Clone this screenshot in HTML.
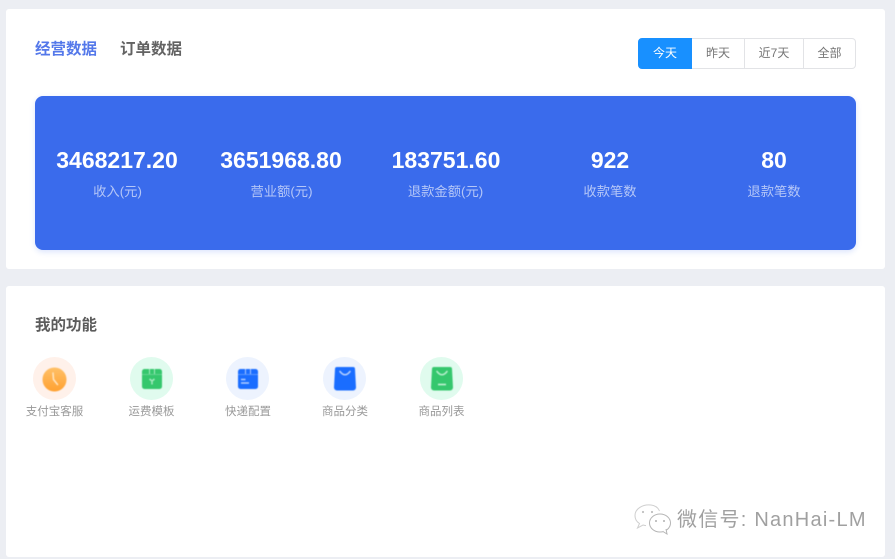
<!DOCTYPE html>
<html lang="zh">
<head>
<meta charset="utf-8">
<style>
html,body{margin:0;padding:0;}
body{width:895px;height:559px;background:#eceef3;position:relative;overflow:hidden;font-family:"Liberation Sans","Noto Sans CJK SC",sans-serif;}
#w{position:absolute;left:0;top:0;width:895px;height:559px;filter:blur(.3px);}
.a{position:absolute;}
.card{position:absolute;left:6px;width:879px;background:#fff;border-radius:3px;}
.t{position:absolute;white-space:nowrap;line-height:20px;}
.c{transform:translateX(-50%);text-align:center;}
.num{top:148px;font-size:23px;line-height:24px;font-weight:bold;color:#fff;}
.lab{top:182px;font-size:13.300px;color:#b4c6f7;}
.seg{position:absolute;top:38px;height:31px;box-sizing:border-box;border:1px solid #e2e3e6;border-left:0;background:#fff;color:#757575;font-size:12px;line-height:29px;text-align:center;}
.ic{position:absolute;top:357px;width:43px;height:43px;border-radius:50%;}
.il{top:402px;font-size:11.500px;color:#999;}
svg{position:absolute;display:block;}
.sv{filter:blur(.4px);}
</style>
</head>
<body>
<div id="w">
<div class="card" style="top:9px;height:260px;"></div>
<div class="card" style="top:286px;height:271px;"></div>

<div class="t" style="left:35px;top:40px;font-size:15.500px;font-weight:bold;color:#5478ea;">经营数据</div>
<div class="t" style="left:120px;top:40px;font-size:15.500px;font-weight:bold;color:#636363;">订单数据</div>

<div class="seg" style="left:638px;width:54px;background:#1890ff;border:1px solid #1890ff;color:#fff;border-radius:4px 0 0 4px;">今天</div>
<div class="seg" style="left:692px;width:53px;">昨天</div>
<div class="seg" style="left:745px;width:59px;">近7天</div>
<div class="seg" style="left:804px;width:52px;border-radius:0 4px 4px 0;">全部</div>

<div class="a" style="left:35px;top:96px;width:821px;height:154px;background:#3a6bec;border-radius:8px;box-shadow:0 2px 6px rgba(58,107,236,.18);"></div>

<div class="t c num" style="left:117px;">3468217.20</div>
<div class="t c lab" style="left:117.500px;">收入(元)</div>
<div class="t c num" style="left:281px;">3651968.80</div>
<div class="t c lab" style="left:281.500px;">营业额(元)</div>
<div class="t c num" style="left:446px;">183751.60</div>
<div class="t c lab" style="left:445.500px;">退款金额(元)</div>
<div class="t c num" style="left:610px;">922</div>
<div class="t c lab" style="left:610px;">收款笔数</div>
<div class="t c num" style="left:774px;">80</div>
<div class="t c lab" style="left:774px;">退款笔数</div>

<div class="t" style="left:35px;top:316px;font-size:15.500px;font-weight:bold;color:#5c5c5c;">我的功能</div>

<div class="ic" style="left:33px;background:#fff1ea;"></div>
<svg class="sv" style="left:42px;top:366.500px;" width="25" height="25" viewBox="0 0 25 25"><defs><linearGradient id="g1" x1="0" y1="0" x2="0" y2="1"><stop offset="0" stop-color="#ffc067"/><stop offset="1" stop-color="#ffa131"/></linearGradient></defs><circle cx="12.500" cy="12.500" r="12" fill="url(#g1)"/><path d="M11 6L11.500 12.500L15.500 17.500" fill="none" stroke="#ffe6c4" stroke-width="1.500" stroke-linecap="round" stroke-linejoin="round"/></svg>
<div class="t c il" style="left:54.500px;">支付宝客服</div>

<div class="ic" style="left:130px;background:#e0fbee;"></div>
<svg class="sv" style="left:141.500px;top:369px;" width="20" height="20" viewBox="0 0 20 20"><rect width="20" height="20" rx="2.500" fill="#35c76d"/><path d="M0 5.500H20" stroke="#62d48f" stroke-width="1"/><path d="M7.500 0V5M12.500 0V5" stroke="#a6eac1" stroke-width="1"/><path d="M7.500 10L10 12L12.500 10M10 12V15.500" stroke="#a6eac1" stroke-width="1.500" fill="none"/></svg>
<div class="t c il" style="left:151.500px;">运费模板</div>

<div class="ic" style="left:226px;background:#edf3fe;"></div>
<svg class="sv" style="left:238px;top:369px;" width="20" height="20" viewBox="0 0 20 20"><rect width="20" height="20" rx="2.500" fill="#1a6dff"/><path d="M0 5.500H20" stroke="#5a96ff" stroke-width="1"/><path d="M7.500 0V5M12.500 0V5" stroke="#a9c8ff" stroke-width="1"/><path d="M3 10.500H7.500M3 14H11" stroke="#b4cfff" stroke-width="1.500"/></svg>
<div class="t c il" style="left:248px;">快递配置</div>

<div class="ic" style="left:323px;background:#edf3fe;"></div>
<svg class="sv" style="left:334px;top:367px;" width="22" height="24" viewBox="0 0 22 24"><path d="M3 0H19A2 2 0 0 1 21 2L22 20.500A3 3 0 0 1 19 23.500H3A3 3 0 0 1 0 20.500L1 2A2 2 0 0 1 3 0Z" fill="#1a6dff"/><path d="M6 4.500Q11 11 16 4.500" fill="none" stroke="#b4cfff" stroke-width="1.600" stroke-linecap="round"/></svg>
<div class="t c il" style="left:345px;">商品分类</div>

<div class="ic" style="left:420px;background:#e0fbee;"></div>
<svg class="sv" style="left:431px;top:367px;" width="22" height="24" viewBox="0 0 22 24"><path d="M3 0H19A2 2 0 0 1 21 2L22 20.500A3 3 0 0 1 19 23.500H3A3 3 0 0 1 0 20.500L1 2A2 2 0 0 1 3 0Z" fill="#35c76d"/><path d="M6 4.500Q11 11 16 4.500" fill="none" stroke="#b6efcc" stroke-width="1.600" stroke-linecap="round"/><path d="M7 17.500H15" stroke="#c3f2d5" stroke-width="1.600"/></svg>
<div class="t c il" style="left:441.500px;">商品列表</div>

<svg style="left:634px;top:503px;" width="38" height="32" viewBox="0 0 38 32"><path d="M17 2C8.500 1 1 6 1 12.500C1 16 3 19 5.500 20.500L3.500 25L9 22C10 22.300 11 22.500 12 22.600" fill="none" stroke="#cfcfcf" stroke-width="1"/><path d="M17 2C21 2.500 24 4.500 25.500 8" fill="none" stroke="#cfcfcf" stroke-width="1"/><ellipse cx="26" cy="20" rx="10.500" ry="9" fill="#fff" stroke="#b5b5b5" stroke-width="1"/><path d="M29 28.500L33 31L32 26" fill="#fff" stroke="#b5b5b5" stroke-width="1"/><circle cx="9" cy="9" r="1.100" fill="#c0c0c0"/><circle cx="18" cy="9" r="1.100" fill="#c0c0c0"/><circle cx="22" cy="18" r="1" fill="#b0b0b0"/><circle cx="30" cy="18" r="1" fill="#b0b0b0"/></svg>
<div class="t" style="left:677px;top:508px;font-size:20px;line-height:24px;color:#a0a0a0;letter-spacing:1.250px;">微信号: NanHai-LM</div>
</div>
</body>
</html>
